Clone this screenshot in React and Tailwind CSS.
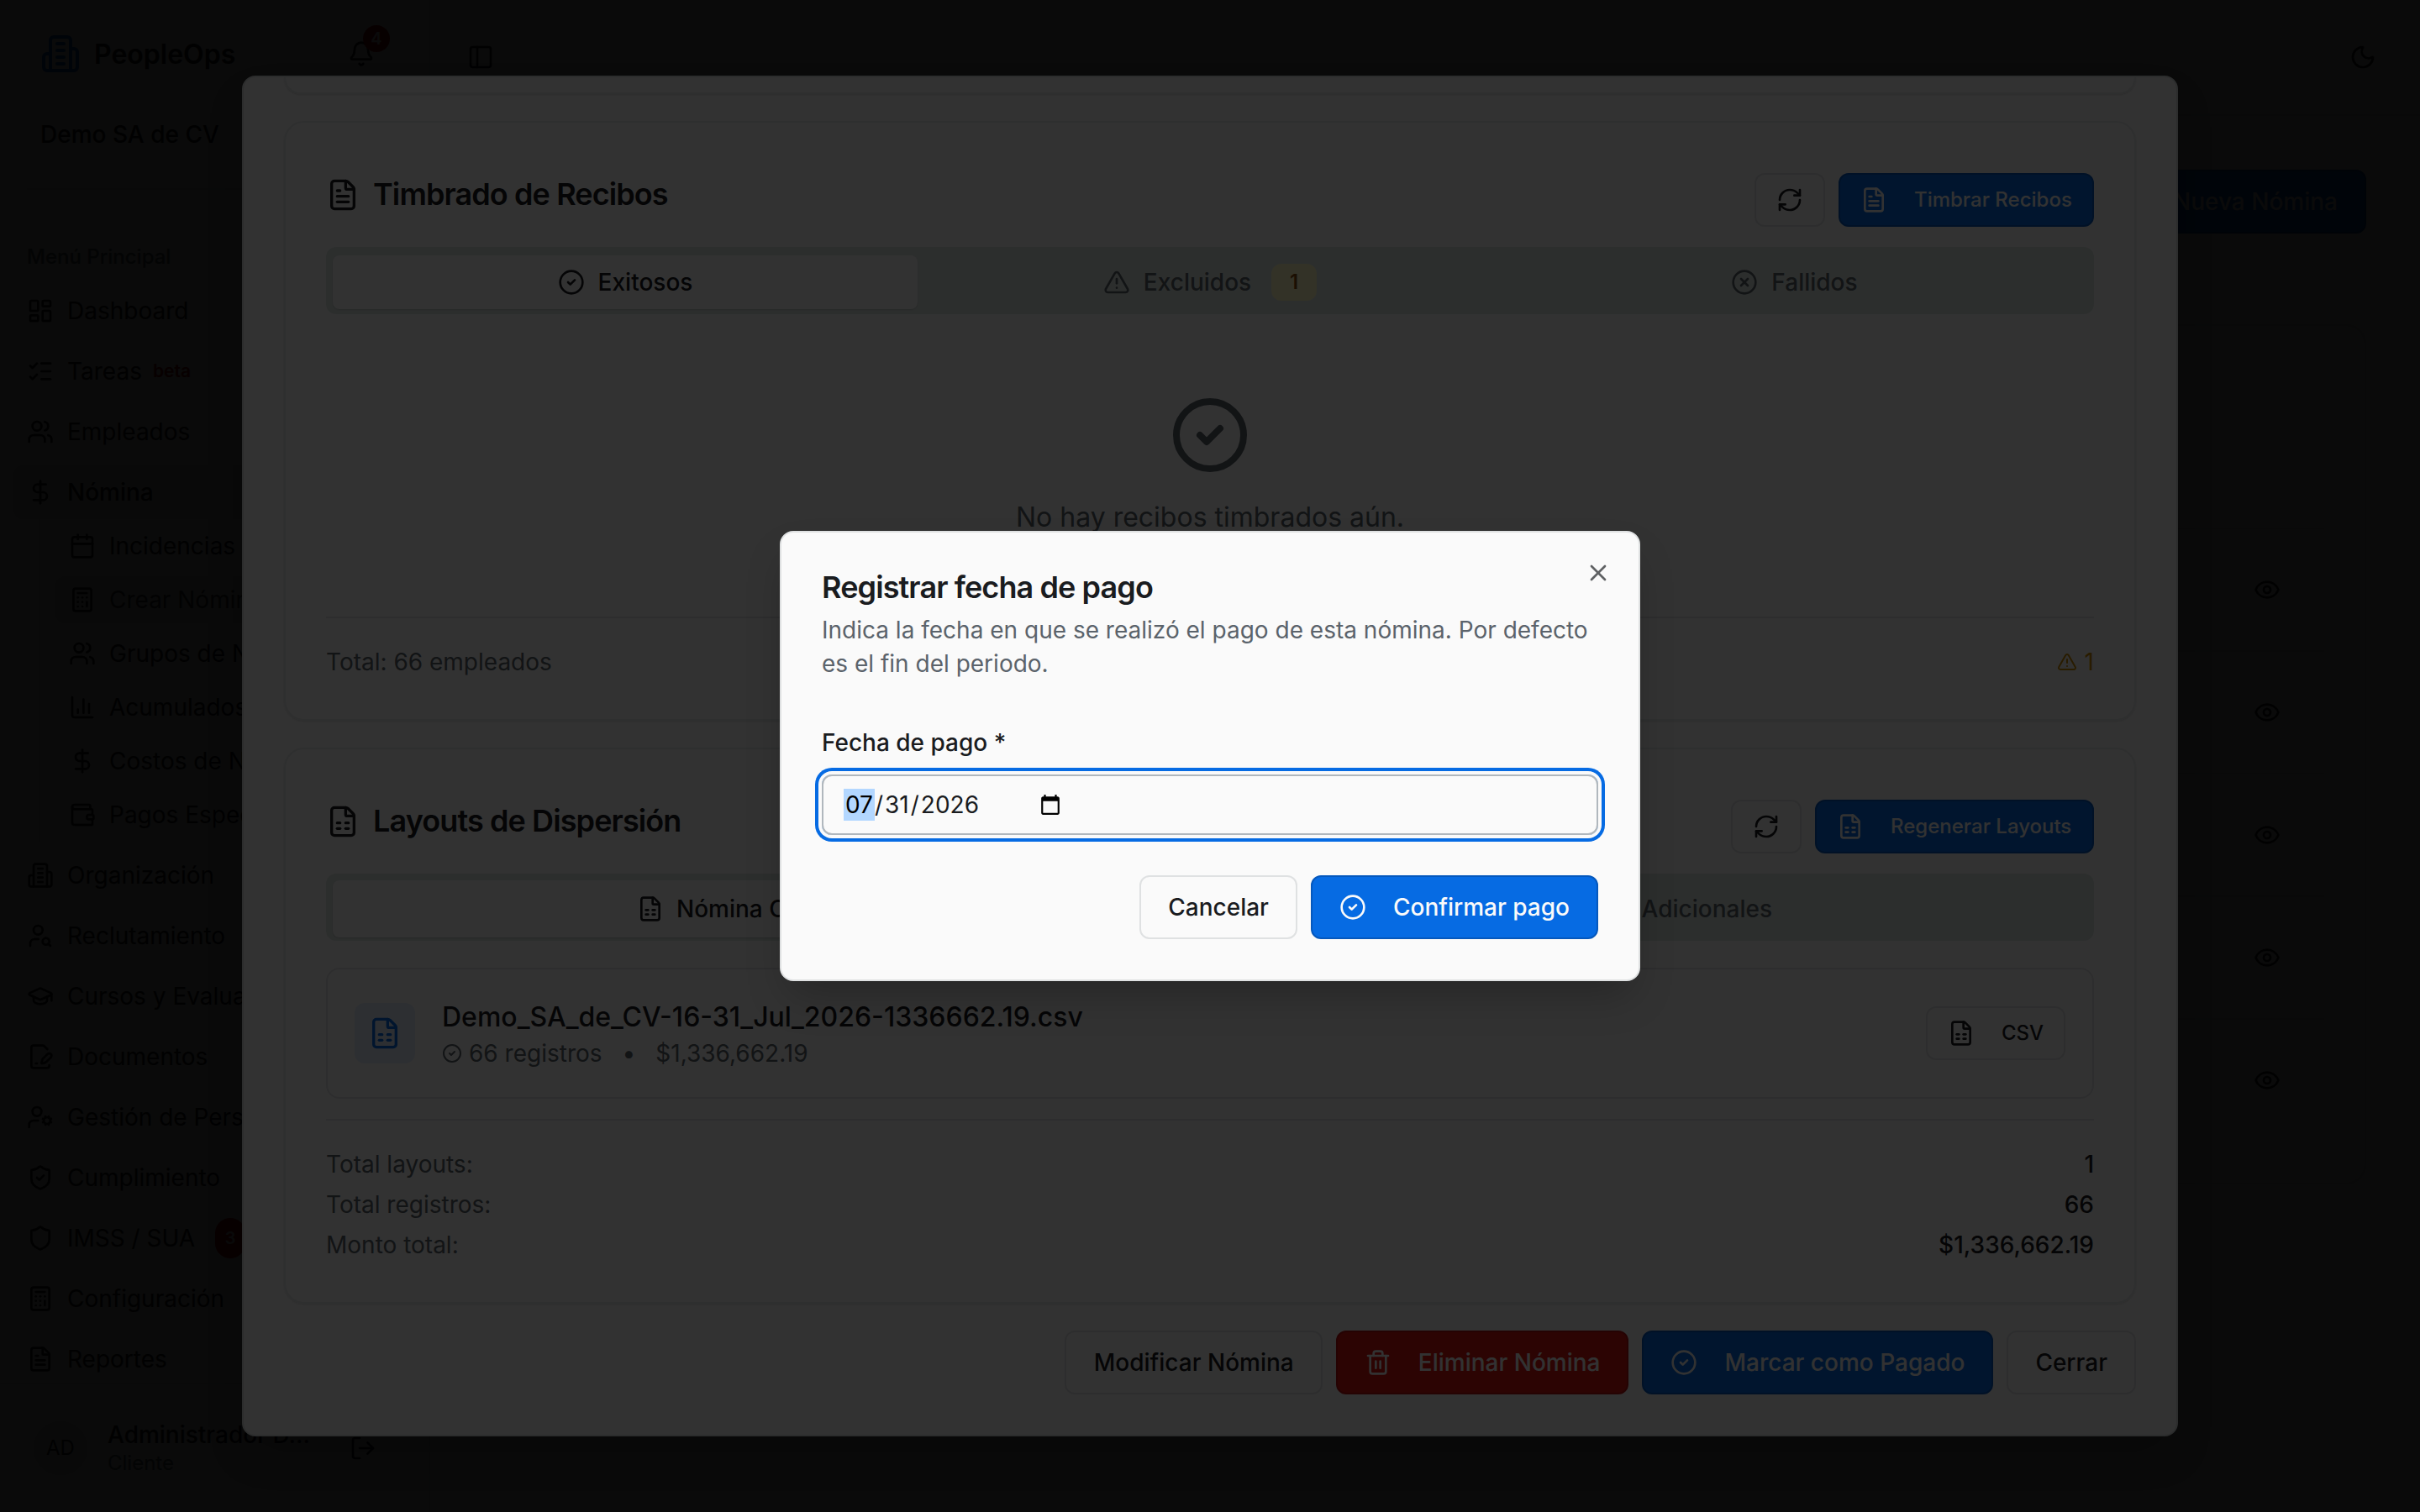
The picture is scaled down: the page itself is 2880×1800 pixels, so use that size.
import { useState } from 'react';
import {
  Bell, Calculator, Calendar, CircleCheck, CircleX, DollarSign, Eye, FilePenLine, FileSpreadsheet, FileText,
  GraduationCap, LayoutDashboard, ListChecks, LogOut, Moon, PanelLeft, RefreshCw, Shield, ShieldCheck, Trash2,
  TriangleAlert, UserCog, UserSearch, Users, Wallet, X,
} from 'lucide-react';

// Building with side wings, used for the brand and the organization entry
function BuildingIcon({ className }) {
  return (
    <svg viewBox="0 0 24 24" fill="none" stroke="currentColor" strokeWidth="2" strokeLinecap="round" strokeLinejoin="round" className={className}>
      <path d="M6 22V4a2 2 0 0 1 2-2h8a2 2 0 0 1 2 2v18Z" />
      <path d="M6 12H4a2 2 0 0 0-2 2v6a2 2 0 0 0 2 2h2" />
      <path d="M18 9h2a2 2 0 0 1 2 2v9a2 2 0 0 1-2 2h-2" />
      <path d="M10 6h4M10 10h4M10 14h4M10 18h4" />
    </svg>
  );
}

function ChartIcon({ className }) {
  return (
    <svg viewBox="0 0 24 24" fill="none" stroke="currentColor" strokeWidth="2" strokeLinecap="round" strokeLinejoin="round" className={className}>
      <path d="M3 3v16a2 2 0 0 0 2 2h16" />
      <path d="M13 17V5M18 17V9M8 17v-3" />
    </svg>
  );
}

const nominaItems = [
  { label: 'Incidencias', icon: Calendar },
  { label: 'Crear Nómina', icon: Calculator, active: true },
  { label: 'Grupos de Nómina', icon: Users },
  { label: 'Acumulados', icon: ChartIcon },
  { label: 'Costos de Nómina', icon: DollarSign },
  { label: 'Pagos Especiales', icon: Wallet },
];

const menu = [
  { label: 'Dashboard', icon: LayoutDashboard },
  { label: 'Tareas', icon: ListChecks, beta: true },
  { label: 'Empleados', icon: Users },
  { label: 'Nómina', icon: DollarSign, children: nominaItems },
  { label: 'Organización', icon: BuildingIcon },
  { label: 'Reclutamiento', icon: UserSearch },
  { label: 'Cursos y Evaluaciones', icon: GraduationCap },
  { label: 'Documentos', icon: FilePenLine },
  { label: 'Gestión de Personal', icon: UserCog },
  { label: 'Cumplimiento', icon: ShieldCheck },
  { label: 'IMSS / SUA', icon: Shield, count: 3 },
  { label: 'Configuración', icon: Calculator },
  { label: 'Reportes', icon: FileText },
];

const totals = [
  ['Total layouts:', '1'],
  ['Total registros:', '66'],
  ['Monto total:', '$1,336,662.19'],
];

function Sidebar() {
  return (
    <aside className="flex h-full w-[512px] shrink-0 flex-col border-r-2 border-[#e2e4e6]">
      <div className="flex h-32 shrink-0 items-center pl-12">
        <BuildingIcon className="size-12 text-[#066be3]" />
        <span className="ml-4 pt-0.5 text-[32px] font-semibold">PeopleOps</span>
        <div className="relative ml-auto mr-[64px]">
          <Bell className="size-8" />
          <span className="absolute -top-[18px] left-[18px] flex size-8 items-center justify-center rounded-full bg-red-700 text-[20px] font-semibold text-white">4</span>
        </div>
      </div>
      <div className="flex h-16 shrink-0 items-center pl-12 text-[28px] font-medium">Demo SA de CV</div>
      <div className="mx-8 mt-8 h-0.5 shrink-0 bg-[#e2e4e6]" />
      <div className="mt-16 flex h-8 shrink-0 items-center pl-8 text-[24px] font-medium text-[#5b636b]">Menú Principal</div>
      <nav className="mt-4 flex min-h-0 flex-1 flex-col gap-2 overflow-hidden pl-4 pr-4">
        {menu.map((item) => (
          <div key={item.label} className="shrink-0">
            <div className={`flex h-16 items-center rounded-xl pl-4 text-[28px] ${item.children ? 'bg-[#e9eceb] font-medium' : ''}`}>
              <item.icon className="size-8 shrink-0" />
              <span className="ml-4 whitespace-nowrap">{item.label}</span>
              {item.beta && <span className="ml-[13px] text-[21px] font-semibold text-red-700">beta</span>}
              {item.count && (
                <span className="ml-6 flex h-12 w-9 items-center justify-center rounded-full bg-red-700 text-[20px] font-semibold text-white">{item.count}</span>
              )}
            </div>
            {item.children && (
              <div className="ml-[30px] flex flex-col gap-2 border-l-2 border-[#e2e4e6] py-1 pl-[18px]">
                {item.children.map((sub) => (
                  <div key={sub.label} className={`flex h-14 items-center rounded-xl pl-4 text-[28px] ${sub.active ? 'bg-[#e9eceb] text-[#3f4448]' : ''}`}>
                    <sub.icon className="size-8 shrink-0 text-[#1a1c1f]" />
                    <span className="ml-4 whitespace-nowrap">{sub.label}</span>
                  </div>
                ))}
              </div>
            )}
          </div>
        ))}
      </nav>
      <div className="flex h-[154px] shrink-0 items-center border-t-2 border-[#e2e4e6] pl-10">
        <div className="flex size-16 items-center justify-center rounded-full bg-[#e6eae8] text-[24px]">AD</div>
        <div className="ml-6 w-[260px]">
          <div className="text-[28px] font-medium leading-9">Administrador D...</div>
          <div className="text-[24px] leading-8 text-[#5b636b]">Cliente</div>
        </div>
        <LogOut className="ml-[28px] size-8" />
      </div>
    </aside>
  );
}

function Page() {
  return (
    <div className="flex h-full bg-[#fafafa]">
      <Sidebar />
      <main className="flex flex-1 flex-col">
        <header className="flex h-[138px] items-center justify-between border-b-2 border-[#e2e4e6] pl-11 pr-[52px]">
          <PanelLeft className="size-8" />
          <Moon className="size-8" />
        </header>
        <div className="flex flex-1 flex-col px-16">
          <div className="mt-16 flex justify-end">
            <div className="flex h-[76px] items-center rounded-xl border-2 border-[#0558bd] bg-[#066be3] px-8 text-[28px] font-medium text-white">Nueva Nómina</div>
          </div>
          <div className="mt-[108px] h-[1024px] rounded-3xl border-2 border-[#e2e4e6] px-12 pt-[240px]">
            {[0, 1, 2, 3, 4].map((row) => (
              <div key={row} className="flex h-[146px] items-center justify-end border-t-2 border-[#e2e4e6] pr-[52px]">
                <Eye className="size-8" />
              </div>
            ))}
          </div>
        </div>
      </main>
    </div>
  );
}

function RefreshButton() {
  return (
    <button className="flex h-16 items-center rounded-xl border-2 border-[#e0e2e4] px-6">
      <RefreshCw className="size-8" />
    </button>
  );
}

function SmallPrimary({ icon: Icon, className, children }) {
  return (
    <button className={`flex h-16 items-center gap-8 whitespace-nowrap rounded-xl border-2 border-[#0558bd] bg-[#066be3] px-6 text-[24px] font-medium text-[#fafafa] ${className}`}>
      <Icon className="size-8" />
      {children}
    </button>
  );
}

function Timbrado() {
  return (
    <section className="flex h-[714px] shrink-0 flex-col rounded-3xl border-2 border-[#e6e8ea] px-12 pb-12 pt-[60px] shadow-sm">
      <div className="flex h-16 justify-between">
        <h2 className="flex h-[52px] items-center gap-4 text-[36px] font-semibold tracking-tight">
          <FileText className="size-10" />
          <span className="-mt-0.5">Timbrado de Recibos</span>
        </h2>
        <div className="flex gap-4">
          <RefreshButton />
          <SmallPrimary icon={FileText} className="w-[304px]">Timbrar Recibos</SmallPrimary>
        </div>
      </div>
      <div className="mt-6 grid h-20 grid-cols-3 rounded-xl bg-[#dde6e2] px-2 pb-1.5 pt-2.5 text-[28px] font-medium text-[#5b636b]">
        <div className="flex items-center justify-center gap-4 rounded-lg bg-[#fafafa] text-[#1a1c1f] shadow-sm">
          <CircleCheck className="size-8" />
          Exitosos
        </div>
        <div className="flex items-center justify-center gap-4">
          <TriangleAlert className="size-8" />
          Excluidos
          <span className="ml-2 flex h-11 w-[54px] items-center justify-center rounded-xl bg-[#fef9c3] text-[24px] font-semibold text-[#854d0e]">1</span>
        </div>
        <div className="flex items-center justify-center gap-4 pr-px">
          <CircleX className="size-8" />
          Fallidos
        </div>
      </div>
      <div className="mt-24 flex flex-col items-center text-[#5b636b]">
        <CircleCheck className="size-24" />
        <p className="mt-[26px] text-[32px] leading-[48px]">No hay recibos timbrados aún.</p>
      </div>
      <div className="mt-auto flex justify-between border-t-2 border-[#e0e2e4] pt-8 text-[28px] leading-10 text-[#5b636b]">
        <span>Total: 66 empleados</span>
        <span className="flex items-center gap-[9px] text-[#ca8a04]">
          <TriangleAlert className="size-6" />1
        </span>
      </div>
    </section>
  );
}

function Layouts() {
  return (
    <section className="flex h-[662px] shrink-0 flex-col rounded-3xl border-2 border-[#e6e8ea] px-12 pb-12 pt-[60px] shadow-sm">
      <div className="flex h-16 justify-between">
        <h2 className="flex h-[52px] items-center gap-4 text-[36px] font-semibold tracking-tight">
          <FileSpreadsheet className="size-10" />
          <span className="-mt-0.5">Layouts de Dispersión</span>
        </h2>
        <div className="flex gap-4">
          <RefreshButton />
          <SmallPrimary icon={FileSpreadsheet} className="w-[332px]">Regenerar Layouts</SmallPrimary>
        </div>
      </div>
      <div className="mt-6 grid h-20 grid-cols-2 rounded-xl bg-[#dde6e2] px-2 pb-1 pt-2 text-[28px] font-medium text-[#5b636b]">
        <div className="flex items-center rounded-lg bg-[#fafafa] pl-[362px] text-[#1a1c1f] shadow-sm">
          <FileSpreadsheet className="mr-[15px] size-8" />
          Nómina Ordinaria
        </div>
        <div className="flex items-center justify-end gap-4 pr-[375px]">
          <DollarSign className="size-8" />
          Pagos Adicionales
        </div>
      </div>
      <div className="mt-8 flex h-[156px] items-center rounded-2xl border-2 border-[#e0e2e4] px-8">
        <div className="flex size-[72px] items-center justify-center rounded-xl bg-[#e0e9f8]">
          <FileSpreadsheet className="size-10 text-[#066be3]" />
        </div>
        <div className="ml-8 flex-1">
          <p className="pt-0.5 text-[32px] font-medium leading-[46px]">Demo_SA_de_CV-16-31_Jul_2026-1336662.19.csv</p>
          <p className="flex items-center text-[28px] leading-10 text-[#5b636b]">
            <CircleCheck className="mr-2 size-6" />
            66 registros
            <span className="mx-6">•</span>
            $1,336,662.19
          </p>
        </div>
        <button className="flex h-16 items-center gap-8 rounded-xl border-2 border-[#e0e2e4] px-6 text-[24px] font-medium">
          <FileSpreadsheet className="size-8" />
          CSV
        </button>
      </div>
      <div className="mt-6 flex flex-col gap-2 border-t-2 border-[#e0e2e4] pt-8 text-[28px] leading-10">
        {totals.map(([label, value]) => (
          <div key={label} className="flex justify-between">
            <span className="text-[#5b636b]">{label}</span>
            <span className="font-medium">{value}</span>
          </div>
        ))}
      </div>
    </section>
  );
}

function NominaDialog() {
  return (
    <div className="flex h-[1620px] w-[2304px] flex-col gap-8 overflow-hidden rounded-2xl border-2 border-[#dcdfe1] bg-[#fafafa] px-12 pb-12 shadow-2xl">
      <div className="h-5 shrink-0 rounded-b-3xl border-2 border-t-0 border-[#e6e8ea] shadow-sm" />
      <Timbrado />
      <Layouts />
      <div className="flex h-[76px] shrink-0 justify-end gap-4 whitespace-nowrap text-[28px] font-medium">
        <button className="w-[307px] rounded-xl border-2 border-[#e0e2e4] pl-px">Modificar Nómina</button>
        <button className="flex items-center gap-8 rounded-xl border-2 border-[#b80f10] bg-[#dc1512] px-8 text-[#fafafa]">
          <Trash2 className="size-8" />
          Eliminar Nómina
        </button>
        <button className="flex items-center gap-8 rounded-xl border-2 border-[#0558bd] bg-[#066be3] px-8 text-[#fafafa]">
          <CircleCheck className="size-8" />
          Marcar como Pagado
        </button>
        <button className="rounded-xl border-2 border-[#e0e2e4] px-8">Cerrar</button>
      </div>
    </div>
  );
}

function PagoDialog() {
  const [fecha] = useState(['07', '31', '2026']);

  return (
    <div className="relative flex h-[536px] w-[1024px] flex-col rounded-2xl border-2 border-[#dfe1e2] bg-[#fafafa] p-12 shadow-2xl">
      <X className="absolute right-8 top-8 size-8 text-[#5f6163]" />
      <h2 className="text-[36px] font-semibold leading-[34px] tracking-tight">Registrar fecha de pago</h2>
      <p className="mt-3.5 text-[28px] leading-10 text-[#5b636b]">
        Indica la fecha en que se realizó el pago de esta nómina. Por defecto es el fin del periodo.
      </p>
      <label className="mt-[60px] text-[28px] font-medium leading-7">Fecha de pago *</label>
      <div className="mt-6 flex h-[72px] shrink-0 items-center rounded-xl border-2 border-[#b0b7bd] px-6 text-[28px] ring-4 ring-[#066be3] ring-offset-4 ring-offset-[#fafafa]">
        <span className="bg-[#b3d7ff] px-0.5 leading-[38px] text-black">{fecha[0]}</span>
        <span>/</span>
        <span className="px-0.5">{fecha[1]}</span>
        <span>/</span>
        <span className="px-0.5">{fecha[2]}</span>
        <svg viewBox="0 0 24 24" className="ml-[70px] h-[26px] w-[26px] text-black" fill="currentColor">
          <path d="M20 3h-1V1h-2v2H7V1H5v2H4c-1.100 0-2 .9-2 2v16c0 1.100.9 2 2 2h16c1.100 0 2-.9 2-2V5c0-1.100-.9-2-2-2zm0 18H4V8h16v13z" />
        </svg>
      </div>
      <div className="mt-12 flex h-[76px] shrink-0 justify-end gap-4 text-[28px] font-medium">
        <button className="rounded-xl border-2 border-[#dfe1e2] px-8">Cancelar</button>
        <button className="flex items-center gap-8 rounded-xl border-2 border-[#0558bd] bg-[#066be3] px-8 text-[#fafafa]">
          <CircleCheck className="size-8" />
          Confirmar pago
        </button>
      </div>
    </div>
  );
}

export default function App() {
  return (
    <div className="relative h-[1800px] w-[2880px] overflow-hidden font-['Inter',sans-serif] text-[#1a1c1f]">
      <Page />
      <div className="absolute inset-0 flex items-center justify-center bg-black/80">
        <NominaDialog />
      </div>
      <div className="absolute inset-0 flex items-center justify-center bg-black/80">
        <PagoDialog />
      </div>
    </div>
  );
}
